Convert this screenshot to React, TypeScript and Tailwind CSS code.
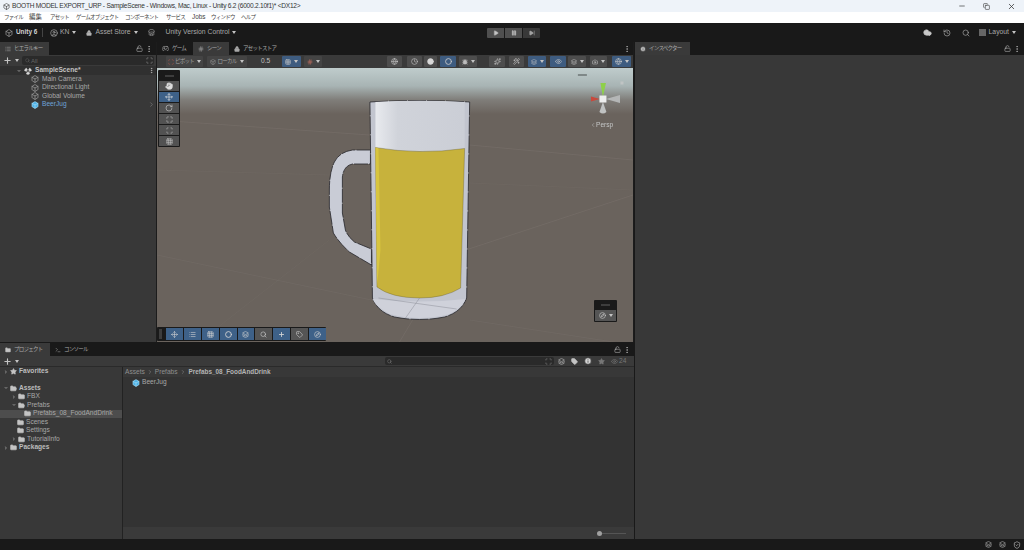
import type { ReactNode } from "react";
import {
  Box,
  ChevronDown,
  ChevronRight,
  Cloud,
  Compass,
  Copy,
  Folder,
  FolderOpen,
  Hand,
  History,
  Info,
  Lock,
  LockOpen,
  Minus,
  Move,
  MoreVertical,
  Plus,
  Radiation,
  RotateCw,
  Scan,
  Search,
  Star,
  X,
  Eye,
  Play,
  Pause,
  SkipForward,
  CircleUser,
  Store,
  Gamepad2,
  Hash,
  Grid3x3,
  Layers,
  Camera,
  Globe,
  Bug,
  Circle,
  Clock,
  Maximize,
  Terminal,
  List,
  ShieldCheck,
  Tag,
  Sparkles,
  Wand2,
} from "lucide-react";

const FONT = "[font-family:'Liberation_Sans','Noto_Sans_CJK_JP',sans-serif]";

const KANA = "text-[5.5px] tracking-[-0.75px]";

const MENU: { label: string; width: string; size: string }[] = [
  { label: "ファイル", width: "w-[25px]", size: KANA },
  { label: "編集", width: "w-[21px]", size: "text-[6.4px]" },
  { label: "アセット", width: "w-[26px]", size: KANA },
  { label: "ゲームオブジェクト", width: "w-[49px]", size: KANA },
  { label: "コンポーネント", width: "w-[41px]", size: KANA },
  { label: "サービス", width: "w-[26px]", size: KANA },
  { label: "Jobs", width: "w-[19px]", size: "text-[6.4px]" },
  { label: "ウィンドウ", width: "w-[30px]", size: KANA },
  { label: "ヘルプ", width: "w-[20px]", size: KANA },
];

function Caret() {
  return <span className="ml-[3px] inline-block h-0 w-0 shrink-0 border-x-[2.5px] border-t-[3px] border-x-transparent border-t-[#c4c4c4]" />;
}

function TitleBar() {
  return (
    <div className="flex h-[12px] items-center bg-[#eef3f9] pl-[3px] text-[6.6px] tracking-[-0.25px] text-[#333]">
      <Box className="mr-[2px] h-[7px] w-[7px]" />
      <span>BOOTH MODEL EXPORT_URP - SampleScene - Windows, Mac, Linux - Unity 6.2 (6000.2.10f1)* &lt;DX12&gt;</span>
      <div className="ml-auto flex items-center gap-[17px] pr-[8px]">
        <Minus className="h-[8px] w-[8px]" />
        <Copy className="h-[7px] w-[7px]" />
        <X className="h-[9px] w-[9px]" />
      </div>
    </div>
  );
}

function MenuBar() {
  return (
    <div className="flex h-[11px] items-center bg-white pl-[4px] text-[#444]">
      {MENU.map((m) => (
        <span key={m.label} className={`whitespace-nowrap ${m.width} ${m.size}`}>
          {m.label}
        </span>
      ))}
    </div>
  );
}

function TopToolbar() {
  return (
    <div className="flex h-[19px] items-center bg-[#191919] text-[6.8px] text-[#a8a8a8]">
      <div className="flex w-[487px] items-center pl-[5px]">
        <Box className="mr-[3px] h-[8px] w-[8px]" />
        <span className="w-[21px] whitespace-nowrap text-[6.4px] font-bold text-[#d2d2d2]">Unity 6</span>
        <span className="ml-[5px] h-[9px] w-px bg-[#444]" />
        <CircleUser className="ml-[7px] mr-[2px] h-[8px] w-[8px]" />
        <span>KN</span>
        <Caret />
        <Lock className="ml-[10px] mr-[3px] h-[6px] w-[6px] fill-[#b4b4b4]" />
        <span>Asset Store</span>
        <Caret />
        <Store className="ml-[10px] h-[7px] w-[7px]" />
        <span className="ml-[11px]">Unity Version Control</span>
        <Caret />
      </div>
      <div className="flex gap-px">
        <div className="flex h-[10px] w-[17px] items-center justify-center rounded-l-[1px] bg-[#4f4f4f]">
          <Play className="h-[6px] w-[6px] fill-[#c4c4c4]" />
        </div>
        <div className="flex h-[10px] w-[17px] items-center justify-center bg-[#4f4f4f]">
          <Pause className="h-[6px] w-[6px] fill-[#d0d0d0]" />
        </div>
        <div className="flex h-[10px] w-[17px] items-center justify-center rounded-r-[1px] bg-[#383838]">
          <SkipForward className="h-[6px] w-[6px] fill-[#a0a0a0]" />
        </div>
      </div>
      <div className="ml-auto flex items-center pr-[8px]">
        <Cloud className="h-[9px] w-[9px] fill-[#c8c8c8] text-[#c8c8c8]" />
        <History className="ml-[11px] h-[8px] w-[8px]" />
        <Search className="ml-[11px] h-[8px] w-[8px]" />
        <span className="ml-[9px] h-[7px] w-[7px] bg-[#666]" />
        <span className="ml-[3px]">Layout</span>
        <Caret />
      </div>
    </div>
  );
}

function TabIcons() {
  return (
    <div className="ml-auto flex items-center gap-[2px] pr-[3px] text-[#b4b4b4]">
      <LockOpen className="h-[7px] w-[7px]" />
      <MoreVertical className="h-[8px] w-[8px]" />
    </div>
  );
}

function Tab({ icon, label, active, width }: { icon: ReactNode; label: string; active?: boolean; width: string }) {
  return (
    <div className={`flex h-full shrink-0 items-center gap-[3px] whitespace-nowrap pl-[5px] text-[#a8a8a8] ${KANA} ${width} ${active ? "bg-[#3a3a3a]" : ""}`}>
      {icon}
      <span>{label}</span>
    </div>
  );
}

function TreeRow({ label, blue }: { label: string; blue?: boolean }) {
  return (
    <div className={`flex h-[8.5px] items-center pl-[31px] text-[6.6px] ${blue ? "text-[#6fa3d8]" : "text-[#a8a8a8]"}`}>
      <Box className={`mr-[3px] h-[8px] w-[8px] ${blue ? "fill-[#4fb3e8] text-[#a6dcf5]" : ""}`} />
      <span>{label}</span>
      {blue && <ChevronRight className="ml-auto mr-[1px] h-[7px] w-[7px] text-[#888]" />}
    </div>
  );
}

function Hierarchy() {
  return (
    <div className="flex w-[156px] shrink-0 flex-col">
      <div className="flex h-[13px] items-center bg-[#191919]">
        <Tab active width="w-[49px]" icon={<List className="h-[6px] w-[6px]" />} label="ヒエラルキー" />
        <TabIcons />
      </div>
      <div className="flex h-[11px] items-center bg-[#3a3a3a] pl-[3px] pr-[2px] text-[#c4c4c4]">
        <Plus className="h-[9px] w-[9px]" strokeWidth={3} />
        <Caret />
        <div className="ml-[3px] flex h-[9px] flex-1 items-center rounded-[2px] bg-[#2a2a2a] pl-[3px] text-[6px] text-[#666]">
          <Search className="mr-[1px] h-[5px] w-[5px]" />
          <span>All</span>
          <Scan className="ml-auto mr-[1px] h-[7px] w-[7px] text-[#999]" />
        </div>
      </div>
      <div className="flex flex-1 flex-col bg-[#383838]">
        <div className="flex h-[9px] items-center bg-[#303030] pl-[16px] text-[6.6px] font-bold text-[#c4c4c4]">
          <ChevronDown className="h-[6px] w-[6px] fill-[#777] text-[#777]" />
          <Radiation className="mx-[2px] h-[8px] w-[8px] fill-[#d8d8d8] text-[#d8d8d8]" />
          <span className="ml-px">SampleScene*</span>
          <MoreVertical className="ml-auto mr-[1px] h-[7px] w-[7px]" />
        </div>
        <TreeRow label="Main Camera" />
        <TreeRow label="Directional Light" />
        <TreeRow label="Global Volume" />
        <TreeRow label="BeerJug" blue />
      </div>
    </div>
  );
}

function SceneBtn({ children, on, dim, cls }: { children: ReactNode; on?: boolean; dim?: boolean; cls: string }) {
  return (
    <div className={`flex h-[11px] shrink-0 items-center justify-center rounded-[1px] text-[#c8c8c8] ${cls} ${on ? "bg-[#3e5c80]" : dim ? "bg-[#444444]" : "bg-[#4d4d4d]"}`}>
      {children}
    </div>
  );
}

const I = "h-[7px] w-[7px]";
const S = "h-[6px] w-[6px]";

function SceneToolbar() {
  return (
    <div className="flex h-[13px] items-center bg-[#3a3a3a] text-[7px] text-[#a0a0a0]">
      <SceneBtn dim cls="ml-[9px] w-[37px]">
        <Scan className="mr-[1px] h-[6px] w-[6px] text-[#b05a50]" />
        <span className={`text-[#a0a0a0] ${KANA}`}>ピボット</span>
        <Caret />
      </SceneBtn>
      <SceneBtn dim cls="ml-[4px] w-[40px]">
        <Box className="mr-[1px] h-[6px] w-[6px] text-[#9a9a9a]" />
        <span className={`text-[#a0a0a0] ${KANA}`}>ローカル</span>
        <Caret />
      </SceneBtn>
      <span className="ml-[14px] w-[11px] text-[6.6px] text-[#c0c0c0]">0.5</span>
      <SceneBtn on cls="ml-[10px] w-[19px]">
        <Grid3x3 className={S} />
        <Caret />
      </SceneBtn>
      <SceneBtn dim cls="ml-[3px] w-[18px]">
        <Hash className="h-[6px] w-[6px] text-[#c87060]" />
        <Caret />
      </SceneBtn>
      <SceneBtn cls="ml-[65px] w-[15px]"><Globe className={I} /></SceneBtn>
      <SceneBtn cls="ml-[5px] w-[15px]"><Clock className={I} /></SceneBtn>
      <SceneBtn cls="ml-[2px] w-[13px]"><Circle className={`${I} fill-[#d8d8d8] text-[#d8d8d8]`} /></SceneBtn>
      <SceneBtn on cls="ml-[3px] w-[16px]"><Circle className={I} strokeWidth={3} /></SceneBtn>
      <SceneBtn cls="ml-[3px] w-[18px]"><Bug className="h-[6px] w-[6px] fill-[#bbb]" /><Caret /></SceneBtn>
      <SceneBtn cls="ml-[12px] w-[16px]"><Sparkles className={I} /></SceneBtn>
      <SceneBtn cls="ml-[4px] w-[15px]"><Wand2 className={I} /></SceneBtn>
      <SceneBtn on cls="ml-[4px] w-[18px]"><Layers className={S} /><Caret /></SceneBtn>
      <SceneBtn on cls="ml-[4px] w-[16px]"><Eye className={I} /></SceneBtn>
      <SceneBtn cls="ml-[2px] w-[18px]"><Layers className={S} /><Caret /></SceneBtn>
      <SceneBtn cls="ml-[4px] w-[17px]"><Camera className={S} /><Caret /></SceneBtn>
      <SceneBtn on cls="ml-[5px] w-[19px]"><Globe className={I} /><Caret /></SceneBtn>
    </div>
  );
}

function SceneDrawing() {
  return (
    <svg className="absolute inset-0 h-full w-full" viewBox="158 68 475 274" preserveAspectRatio="none">
      <defs>
        <linearGradient id="foam" x1="0" x2="1" y1="0" y2="0">
          <stop offset="0" stopColor="#e8eaee" />
          <stop offset="0.25" stopColor="#d0d3da" />
          <stop offset="1" stopColor="#cbced6" />
        </linearGradient>
      </defs>
      <g stroke="#7d7670" strokeWidth="0.6" fill="none" opacity="0.7">
        <path d="M158 120 L370 135 M470 145 L633 160" />
        <path d="M158 255 L372 300 M470 320 L633 345" opacity="0.7" />
        <path d="M158 170 L330 175 M470 183 L633 190" opacity="0.5" />
        <path d="M633 195 L466 250" />
        <path d="M400 342 L425 300" />
        <path d="M200 342 L330 240" opacity="0.5" />
      </g>
      {/* handle */}
      <path
        d="M371 150 L353 150 Q340 152 335 162 Q330 172 330 190 L330 207 L334 233 Q340 243 350 252 L372 265 L372 249 L355 242 Q348 236 346 230 L343 213 L343 177 Q344 166 353 164 L371 164 Z"
        fill="#c9ccd6"
        stroke="#26262a"
        strokeWidth="0.8"
        strokeDasharray="14 1"
      />
      {/* glass */}
      <path
        d="M370.5 102 Q420 99 470 102 L467 298 Q462 312 445 317 Q420 322 395 317 Q378 312 373 298 Z"
        fill="#c2c5cf"
        stroke="#26262a"
        strokeWidth="0.8"
        strokeDasharray="18 1"
      />
      <path d="M376 102 Q420 99.5 465 102 L465 148.5 Q420 155 376 147.5 Z" fill="url(#foam)" />
      <path d="M373 299 Q376 306 390 314 Q420 322 450 314 Q462 308 466 299 Q420 304 373 299 Z" fill="#cfd1da" />
      <path
        d="M376 147.5 Q420 155 465 148.5 L461 288 Q445 298 420 298 Q392 298 377.5 287 Z"
        fill="#c7b23c"
        stroke="#4a4420"
        strokeWidth="0.3"
      />
      <path d="M376 147.5 L379 148.2 L381 250 L377.5 287 Z" fill="#d8c53f" />
      <path d="M379 298 L457 309 M420 298 L406 318" stroke="#8d8f99" strokeWidth="0.5" />
      {/* gizmo */}
      <g>
        <path d="M603 97 L600.5 83 L606 83 Z" fill="#8ed04a" />
        <path d="M600 99 L591 96.5 L591 101.5 Z" fill="#c8483c" />
        <path d="M606 99 L620 95 L620 103 Z" fill="#b4b6b6" />
        <path d="M603 102 L599.5 112 Q603 115 606.5 112 Z" fill="#c0c2c2" />
        <rect x="599.5" y="95.5" width="7" height="7" fill="#eeeeee" />
        <rect x="620.5" y="81.5" width="3" height="3" fill="#c0c4c4" />
        <rect x="578" y="74" width="9" height="2" fill="#7f8888" />
      </g>
    </svg>
  );
}

function ToolPalette() {
  const icons = [
    <Hand key="h" className="h-[8px] w-[8px] fill-[#ddd] text-[#ddd]" />,
    <Move key="m" className="h-[8px] w-[8px] text-[#e0e0e0]" />,
    <RotateCw key="r" className="h-[8px] w-[8px]" />,
    <Maximize key="s" className={I} />,
    <Scan key="t" className={I} />,
    <Grid3x3 key="g" className={I} />,
  ];
  return (
    <div className="absolute left-[1px] top-[2px] flex w-[22px] flex-col gap-px rounded-[1px] bg-[#1a1a1a] p-[1px]">
      <div className="flex h-[9px] items-center justify-center">
        <span className="h-[2px] w-[9px] bg-[#3d3d3d]" />
      </div>
      {icons.map((icon, i) => (
        <div key={i} className={`flex h-[10px] items-center justify-center text-[#c4c4c4] ${i === 1 ? "bg-[#3e6188]" : "bg-[#525252]"}`}>
          {icon}
        </div>
      ))}
    </div>
  );
}

function BottomPalette() {
  const items: [ReactNode, boolean][] = [
    [<Move key="a" className={I} />, true],
    [<List key="b" className={I} />, true],
    [<Grid3x3 key="c" className={I} />, true],
    [<Circle key="d" className={I} strokeWidth={3} />, true],
    [<Layers key="e" className={I} />, true],
    [<Search key="f" className={I} />, false],
    [<Plus key="g" className={I} strokeWidth={3} />, true],
    [<Tag key="h" className={I} />, false],
    [<Compass key="i" className={I} />, true],
  ];
  return (
    <div className="absolute bottom-[1px] left-0 flex h-[14px] w-[169px] items-center gap-px rounded-[1px] bg-[#1a1a1a] pl-[2px] text-[#d4d4d4]">
      <span className="mr-[3px] h-[10px] w-[3px] bg-[#3d3d3d]" />
      {items.map(([icon, on], i) => (
        <div key={i} className={`flex h-[12px] w-[17px] items-center justify-center ${on ? "bg-[#3e6188]" : "bg-[#555]"}`}>
          {icon}
        </div>
      ))}
    </div>
  );
}

function SceneView() {
  return (
    <div className="flex min-w-0 flex-1 flex-col border-x border-[#1c1c1c]">
      <div className="flex h-[13px] items-center bg-[#191919]">
        <Tab width="w-[36px]" icon={<Gamepad2 className={I} />} label="ゲーム" />
        <Tab active width="w-[36px]" icon={<Hash className={S} />} label="シーン" />
        <Tab width="w-[50px]" icon={<Lock className="h-[6px] w-[6px] fill-[#a8a8a8]" />} label="アセットストア" />
        <div className="ml-auto pr-[2px] text-[#b4b4b4]">
          <MoreVertical className="h-[8px] w-[8px]" />
        </div>
      </div>
      <SceneToolbar />
      <div className="relative flex-1 overflow-hidden bg-[linear-gradient(to_bottom,#bfcccc_0px,#a8b4b4_18px,#7f7d79_32px,#6a635d_46px,#6a635d_100%)]">
        <SceneDrawing />
        <ToolPalette />
        <BottomPalette />
        <div className="absolute left-[433px] top-[54px] flex items-center text-[6.6px] text-[#c4c6c6]">
          <ChevronRight className="h-[6px] w-[6px] rotate-180" />
          <span>Persp</span>
        </div>
        <div className="absolute bottom-[20px] right-[16px] flex w-[23px] flex-col rounded-[1px] bg-[#1a1a1a] px-[1px] pb-[1px]">
          <div className="flex h-[10px] items-center justify-center">
            <span className="h-[2px] w-[9px] bg-[#3d3d3d]" />
          </div>
          <div className="flex h-[11px] items-center justify-center bg-[#555] text-[#d0d0d0]">
            <Compass className={I} />
            <Caret />
          </div>
        </div>
      </div>
    </div>
  );
}

function FolderRow({ label, pad, open, arrow, bold, selected }: { label: string; pad: string; open?: boolean; arrow?: "right" | "down"; bold?: boolean; selected?: boolean }) {
  const Icon = open ? FolderOpen : Folder;
  return (
    <div className={`flex h-[8.5px] items-center text-[6.6px] ${pad} ${bold ? "font-bold text-[#bdbdbd]" : "text-[#a8a8a8]"} ${selected ? "bg-[#4d4d4d]" : ""}`}>
      {arrow === "right" && <ChevronRight className="mr-[1px] h-[6px] w-[6px] fill-[#777] text-[#777]" />}
      {arrow === "down" && <ChevronDown className="mr-[1px] h-[6px] w-[6px] fill-[#777] text-[#777]" />}
      <Icon className="mr-[2px] h-[7px] w-[7px] fill-[#c4c4c4] text-[#c4c4c4]" />
      <span>{label}</span>
    </div>
  );
}

function Project() {
  return (
    <div className="flex h-[197px] w-[634px] shrink-0 flex-col border-t border-[#191919]">
      <div className="flex h-[13px] shrink-0 items-center bg-[#191919]">
        <Tab active width="w-[50px]" icon={<Folder className="h-[6px] w-[6px] fill-[#c4c4c4]" />} label="プロジェクト" />
        <Tab width="w-[40px]" icon={<Terminal className={S} />} label="コンソール" />
        <TabIcons />
      </div>
      <div className="flex h-[11px] shrink-0 items-center border-b border-[#2a2a2a] bg-[#3a3a3a] pl-[3px] text-[#c4c4c4]">
        <Plus className="h-[9px] w-[9px]" strokeWidth={3} />
        <Caret />
        <div className="ml-[366px] flex h-[8px] w-[169px] items-center justify-between rounded-[2px] bg-[#2a2a2a] px-[2px] text-[#888]">
          <Search className="h-[5px] w-[5px]" />
          <Scan className={I} />
        </div>
        <div className="ml-[4px] flex items-center gap-[6px]">
          <Layers className={I} />
          <Tag className={`${I} fill-[#c4c4c4]`} />
          <Info className="h-[8px] w-[8px] fill-[#d4d4d4] text-[#333]" />
          <Star className={`${I} fill-[#777] text-[#777]`} />
          <span className="flex items-center gap-px text-[6.6px] text-[#777]">
            <Eye className={I} />
            24
          </span>
        </div>
      </div>
      <div className="flex min-h-0 flex-1">
        <div className="w-[123px] shrink-0 border-r border-[#222] bg-[#383838]">
          <div className="flex h-[9px] items-center pl-[3px] text-[6.6px] font-bold text-[#bdbdbd]">
            <ChevronRight className="mr-[1px] h-[6px] w-[6px] fill-[#777] text-[#777]" />
            <Star className="mr-[2px] h-[7px] w-[7px] fill-[#c4c4c4] text-[#c4c4c4]" />
            <span>Favorites</span>
          </div>
          <div className="h-[8px]" />
          <FolderRow label="Assets" pad="pl-[3px]" open arrow="down" bold />
          <FolderRow label="FBX" pad="pl-[11px]" arrow="right" />
          <FolderRow label="Prefabs" pad="pl-[11px]" open arrow="down" />
          <FolderRow label="Prefabs_08_FoodAndDrink" pad="pl-[24px]" selected />
          <FolderRow label="Scenes" pad="pl-[17px]" />
          <FolderRow label="Settings" pad="pl-[17px]" />
          <FolderRow label="TutorialInfo" pad="pl-[11px]" arrow="right" />
          <FolderRow label="Packages" pad="pl-[3px]" arrow="right" bold />
        </div>
        <div className="flex min-w-0 flex-1 flex-col bg-[#333333]">
          <div className="flex h-[10px] items-center bg-[#383838] pl-[2px] text-[6.6px] text-[#8f8f8f]">
            <span>Assets</span>
            <ChevronRight className="mx-[2px] h-[6px] w-[6px]" />
            <span>Prefabs</span>
            <ChevronRight className="mx-[2px] h-[6px] w-[6px]" />
            <span className="ml-px text-[6.4px] font-bold text-[#b4b4b4]">Prefabs_08_FoodAndDrink</span>
          </div>
          <div className="flex h-[11px] items-center pl-[9px] text-[6.6px] text-[#a8a8a8]">
            <Box className="mr-[2px] h-[8px] w-[8px] fill-[#4fb3e8] text-[#a6dcf5]" />
            <span>BeerJug</span>
          </div>
          <div className="mt-auto flex h-[12px] items-center justify-end bg-[#3a3a3a] pr-[8px]">
            <span className="h-[5px] w-[5px] rounded-full bg-[#a0a0a0]" />
            <span className="h-px w-[24px] bg-[#555]" />
          </div>
        </div>
      </div>
    </div>
  );
}

function Inspector() {
  return (
    <div className="flex flex-1 flex-col">
      <div className="flex h-[13px] items-center bg-[#191919]">
        <Tab active width="w-[55px]" icon={<Info className="h-[6px] w-[6px] fill-[#c4c4c4] text-[#333]" />} label="インスペクター" />
        <TabIcons />
      </div>
      <div className="flex-1 bg-[#383838]" />
    </div>
  );
}

export default function App() {
  return (
    <div className={`flex h-[550px] w-[1024px] flex-col overflow-hidden bg-[#191919] leading-none ${FONT}`}>
      <TitleBar />
      <MenuBar />
      <TopToolbar />
      <div className="flex min-h-0 flex-1">
        <div className="flex w-[634px] shrink-0 flex-col">
          <div className="flex min-h-0 flex-1">
            <Hierarchy />
            <SceneView />
          </div>
          <Project />
        </div>
        <div className="w-px bg-[#191919]" />
        <Inspector />
      </div>
      <div className="flex h-[11px] items-center justify-end gap-[7px] bg-[#191919] pr-[3px] text-[#b8b8b8]">
        <Layers className={I} />
        <Layers className={I} />
        <ShieldCheck className="h-[8px] w-[8px]" />
      </div>
    </div>
  );
}
